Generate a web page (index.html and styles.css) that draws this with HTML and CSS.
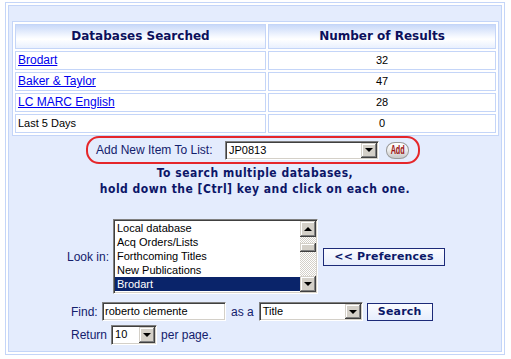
FILE: index.html
```html
<!DOCTYPE html>
<html>
<head>
    <title>Search Databases</title>
    <link rel="stylesheet" href="styles.css">
</head>
<body>
    <div class="frame">
        <div class="panel">
            <table class="results">
                <tr>
                    <th class="db-col">Databases Searched</th>
                    <th>Number of Results</th>
                </tr>
                <tr><td><a href="#">Brodart</a></td><td class="num">32</td></tr>
                <tr><td><a href="#">Baker &amp; Taylor</a></td><td class="num">47</td></tr>
                <tr><td><a href="#">LC MARC English</a></td><td class="num">28</td></tr>
                <tr><td>Last 5 Days</td><td class="num">0</td></tr>
            </table>

            <div class="add-box">
                <span class="add-label">Add New Item To List:</span>
                <div class="dropdown list-pick">
                    <span class="dropdown-text">JP0813</span>
                    <span class="drop-btn"></span>
                </div>
                <button class="add-btn"><span>Add</span></button>
            </div>

            <p class="hint">To search multiple databases,<br>hold down the [Ctrl] key and click on each one.</p>

            <div class="search-form">
                <div class="look-row">
                    <span class="look-label">Look in:</span>
                    <div class="listbox">
                        <ul class="options">
                            <li>Local database</li>
                            <li>Acq Orders/Lists</li>
                            <li>Forthcoming Titles</li>
                            <li>New Publications</li>
                            <li class="selected">Brodart</li>
                        </ul>
                        <div class="scrollbar">
                            <span class="scroll-btn up"></span>
                            <span class="scroll-thumb"></span>
                            <span class="scroll-btn down"></span>
                        </div>
                    </div>
                    <button class="btn pref-btn">&lt;&lt; Preferences</button>
                </div>

                <div class="find-row">
                    <span class="find-label">Find:</span>
                    <div class="textbox">roberto clemente</div>
                    <span class="as-label">as a</span>
                    <div class="dropdown type-pick">
                        <span class="dropdown-text">Title</span>
                        <span class="drop-btn"></span>
                    </div>
                    <button class="btn search-btn">Search</button>
                </div>

                <div class="return-row">
                    <span>Return</span>
                    <div class="dropdown count-pick">
                        <span class="dropdown-text">10</span>
                        <span class="drop-btn"></span>
                    </div>
                    <span>per page.</span>
                </div>
            </div>
        </div>
    </div>
</body>
</html>
```

FILE: styles.css
```css
* {
    box-sizing: border-box;
}

body {
    margin: 0;
    background: #fff;
    font-family: "Liberation Sans", Arial, sans-serif;
    font-size: 12px;
    color: #13206c;
}

.frame {
    width: 500px;
    height: 353px;
    margin: 2px 0 0 5px;
    border: 1px solid #c4d5f8;
    padding: 2px;
}

.panel {
    height: 100%;
    border: 1px solid #c4d5f8;
    background: #e4ecfd;
    padding-top: 15px;
}

/* Results table */
.results {
    margin-left: 3px;
    width: 487px;
    border: 1px solid #c4d5f8;
    border-spacing: 2px;
    background: #fff;
}

.results th,
.results td {
    border: 1px solid #c4d5f8;
    padding: 0 2px;
}

.results th {
    font: bold 12px/23px "DejaVu Sans", Verdana, sans-serif;
    color: #0b105c;
    background: linear-gradient(#c9d9f9, #f6f9ff 50%, #fff 62%, #e9f0fe);
}

.results th.db-col {
    width: 251px;
}

.results td {
    line-height: 17px;
    font-size: 11px;
    color: #000;
}

.results td a {
    font-size: 12px;
    color: #0000ee;
}

.results td.num {
    text-align: center;
}

/* Add to list box */
.add-box {
    display: flex;
    align-items: center;
    width: 334px;
    height: 28px;
    margin-left: 77px;
    border: 2px solid #e5262a;
    border-radius: 13px;
    padding: 0 9px 0 8px;
}

.add-label {
    width: 129px;
}

.add-btn {
    display: flex;
    align-items: center;
    justify-content: center;
    width: 23px;
    height: 17px;
    margin-left: 7px;
    padding: 0;
    border: 1px solid #9a9a9a;
    border-radius: 9px / 8px;
    background: linear-gradient(#fff, #eeeeee 45%, #c8c8c8);
}

.add-btn span {
    font: bold 12px "Liberation Sans", Arial, sans-serif;
    color: #9c1010;
    transform: scaleX(0.6);
}

/* Windows style controls */
.dropdown {
    display: flex;
    height: 19px;
    padding: 1px;
    border: 1px solid;
    border-color: #808080 #fff #fff #808080;
    box-shadow: inset 1px 1px #404040, inset -1px -1px #d4d0c8;
    background: #fff;
}

.dropdown-text {
    flex: 1;
    padding-left: 2px;
    font-size: 11px;
    line-height: 15px;
    color: #000;
}

.drop-btn,
.scroll-btn,
.scroll-thumb {
    display: flex;
    align-items: center;
    justify-content: center;
    width: 16px;
    background: #d4d0c8;
    box-shadow: inset -1px -1px #404040, inset 1px 1px #d4d0c8, inset -2px -2px #808080, inset 2px 2px #fff;
}

.drop-btn::after,
.scroll-btn.down::after {
    content: "";
    border-left: 4px solid transparent;
    border-right: 4px solid transparent;
    border-top: 4px solid #000;
}

.scroll-btn.up::after {
    content: "";
    border-left: 4px solid transparent;
    border-right: 4px solid transparent;
    border-bottom: 4px solid #000;
}

.list-pick {
    width: 154px;
}

.type-pick {
    width: 104px;
}

.count-pick {
    width: 46px;
    height: 20px;
    margin: 0 4px;
}

.textbox {
    width: 124px;
    height: 19px;
    padding: 1px 2px;
    border: 1px solid;
    border-color: #808080 #fff #fff #808080;
    box-shadow: inset 1px 1px #404040, inset -1px -1px #d4d0c8;
    background: #fff;
    font-size: 11px;
    line-height: 15px;
    color: #000;
}

.btn {
    padding: 0;
    border: 1px solid #1c2a78;
    background: linear-gradient(#fbfcff, #e6edfc);
    font: bold 11px "DejaVu Sans", Verdana, sans-serif;
    letter-spacing: 0.2px;
    color: #0c1868;
}

/* Instructions */
.hint {
    margin: 1px 0 0;
    text-align: center;
    font: bold 12px/16px "DejaVu Sans", Verdana, sans-serif;
    font-stretch: condensed;
    letter-spacing: 0.5px;
    color: #0c1668;
}

/* Search form */
.search-form {
    margin-top: 22px;
}

.look-row {
    display: flex;
    align-items: center;
    padding-left: 58px;
}

.look-label {
    width: 46px;
}

.listbox {
    display: flex;
    width: 205px;
    height: 75px;
    padding: 1px;
    border: 1px solid;
    border-color: #808080 #fff #fff #808080;
    box-shadow: inset 1px 1px #404040, inset -1px -1px #d4d0c8;
    background: #fff;
}

.options {
    flex: 1;
    margin: 0;
    padding: 0;
    list-style: none;
    font-size: 11px;
    color: #000;
}

.options li {
    height: 14px;
    padding-left: 2px;
    line-height: 14px;
}

.options li.selected {
    background: #0a246a;
    color: #fff;
}

.scrollbar {
    display: flex;
    flex-direction: column;
    width: 16px;
    background: repeating-conic-gradient(#d4d0c8 0 25%, #fff 0 50%) 0 0 / 2px 2px;
}

.scroll-btn {
    height: 16px;
}

.scroll-thumb {
    height: 9px;
    margin: 6px 0 auto;
}

.pref-btn {
    width: 122px;
    height: 18px;
    margin-left: 5px;
}

.find-row {
    display: flex;
    align-items: center;
    padding-left: 62px;
    margin-top: 8px;
}

.find-label {
    width: 31px;
}

.as-label {
    margin: 0 5px;
}

.search-btn {
    width: 66px;
    height: 18px;
    margin-left: 4px;
}

.return-row {
    display: flex;
    align-items: center;
    padding-left: 62px;
    margin-top: 4px;
}
```
